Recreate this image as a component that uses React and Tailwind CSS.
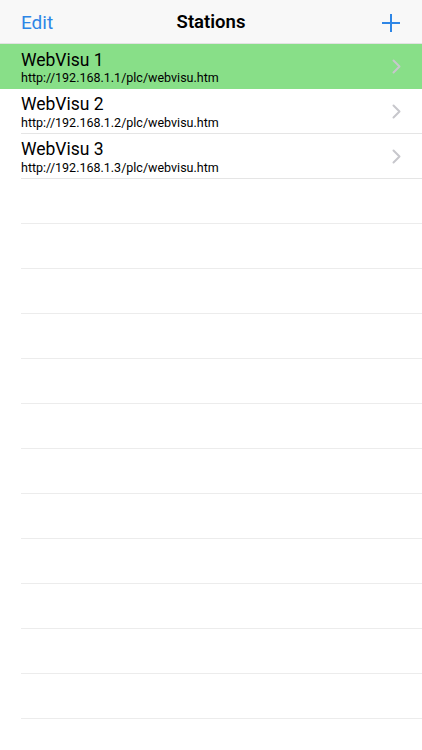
import { useState } from "react";

const stations = [
  { name: "WebVisu 1", url: "http://192.168.1.1/plc/webvisu.htm" },
  { name: "WebVisu 2", url: "http://192.168.1.2/plc/webvisu.htm" },
  { name: "WebVisu 3", url: "http://192.168.1.3/plc/webvisu.htm" },
];

const Chevron = () => (
  <svg width="9" height="15" viewBox="0 0 9 15" fill="none">
    <path d="M1.5 1.5 L7.5 7.5 L1.5 13.5" stroke="#c7c7cc" strokeWidth="2" strokeLinecap="round" strokeLinejoin="round" />
  </svg>
);

const App = () => {
  const [selected, setSelected] = useState(0);

  return (
    <div className="w-[422px] h-[750px] bg-white overflow-hidden" style={{ fontFamily: "Roboto, 'Liberation Sans', sans-serif" }}>
      {/* nav bar */}
      <div className="h-[44px] bg-[#f8f8f8] border-b border-[#e2e2e2] flex items-center justify-between px-[21px] pt-[3px]">
        <span className="text-[19px] text-[#2e86e6] w-[60px]">Edit</span>
        <span className="text-[18.5px] font-semibold text-black">Stations</span>
        <div className="w-[60px] flex justify-end">
          <svg width="20" height="20" viewBox="0 0 20 20">
            <path d="M10 1 V19 M1 10 H19" stroke="#2e86e6" strokeWidth="2" />
          </svg>
        </div>
      </div>

      {/* station rows */}
      {stations.map((s, i) => (
        <div
          key={s.name}
          onClick={() => setSelected(i)}
          className={`h-[45px] flex items-center pl-[21px] ${selected === i ? "bg-[#88df88]" : ""}`}
        >
          <div className={`flex-1 h-full flex items-center pr-[21px] ${selected === i ? "" : "border-b border-[#e5e5e5]"}`}>
            <div className="flex-1 flex flex-col leading-none pt-[3px]">
              <span className="text-[17.5px] text-black">{s.name}</span>
              <span className="text-[12.5px] text-black mt-[3px]">{s.url}</span>
            </div>
            <Chevron />
          </div>
        </div>
      ))}

      {/* empty rows */}
      {Array.from({ length: 12 }).map((_, i) => (
        <div key={i} className="h-[45px] pl-[21px]">
          <div className="h-full border-b border-[#ececec]" />
        </div>
      ))}
    </div>
  );
};

export default App;
